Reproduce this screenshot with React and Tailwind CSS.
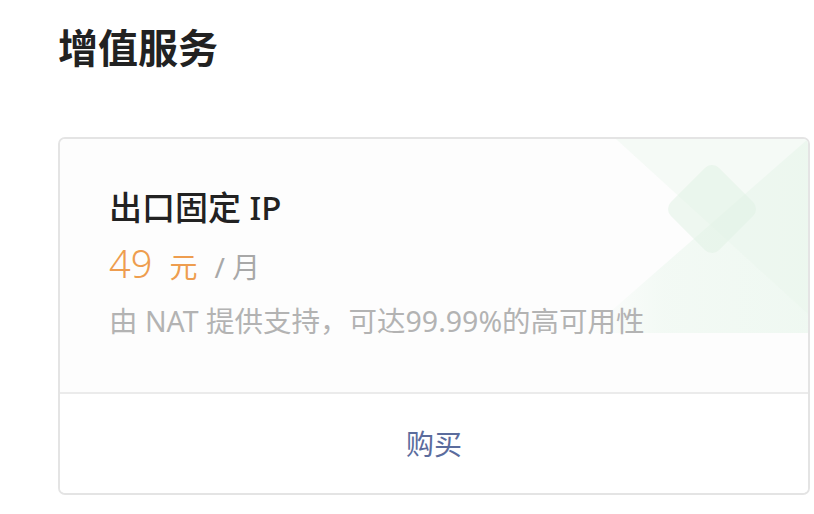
import React from 'react';

const FONT = { fontFamily: '"Noto Sans", "Noto Sans CJK SC", sans-serif' };

function Decoration() {
  // pale green "X" with a rounded diamond, top right of the card
  return (
    <svg
      className="absolute right-0 top-0 pointer-events-none"
      width="222"
      height="194"
      viewBox="0 0 222 194"
    >
      <defs>
        <linearGradient id="fadeL" x1="0" y1="0" x2="1" y2="0">
          <stop offset="0" stopColor="#e6f5ea" stopOpacity="0" />
          <stop offset="0.35" stopColor="#e6f5ea" stopOpacity="0.45" />
          <stop offset="1" stopColor="#e6f5ea" stopOpacity="0.6" />
        </linearGradient>
      </defs>
      <polygon points="0,194 222,0 222,194" fill="url(#fadeL)" />
      <polygon points="30,0 222,0 222,175" fill="#e8f6ec" opacity="0.4" />
      <rect
        x="92"
        y="36"
        width="68"
        height="68"
        rx="10"
        fill="#dff1e4"
        opacity="0.5"
        transform="rotate(45 126 70)"
      />
    </svg>
  );
}

export default function App() {
  return (
    <div className="min-h-[514px] bg-white pl-[58px] pr-[4px]" style={FONT}>
      <h1 className="pt-[22px] h-[137px] text-[40px] leading-[52px] font-semibold text-[#222]">
        增值服务
      </h1>

      <div className="w-[752px] h-[358px] border-2 border-[#e4e4e4] rounded-[7px] overflow-hidden flex flex-col">
        <div className="relative h-[255px] bg-[#fdfdfd] border-b-2 border-[#ebebeb] pl-[49px] pt-[48px]">
          <Decoration />
          <div className="relative">
            <div className="text-[33px] leading-[42px] font-medium text-[#222]">出口固定 IP</div>
            <div className="mt-[12px] flex items-baseline h-[44px]">
              <span className="text-[38px] leading-[44px] font-light text-[#ee9d4f]">49</span>
              <span className="ml-[17px] text-[28px] text-[#ee9d4f]">元</span>
              <span className="ml-[17px] text-[28px] text-[#a8a8a8]">/ 月</span>
            </div>
            <div className="mt-[17px] text-[28.5px] leading-[38px] text-[#b3b3b3]">
              由 NAT 提供支持，可达99.99%的高可用性
            </div>
          </div>
        </div>
        <div className="flex-1 flex items-center justify-center bg-white">
          <span className="text-[28px] text-[#5b6c9d]">购买</span>
        </div>
      </div>
    </div>
  );
}
